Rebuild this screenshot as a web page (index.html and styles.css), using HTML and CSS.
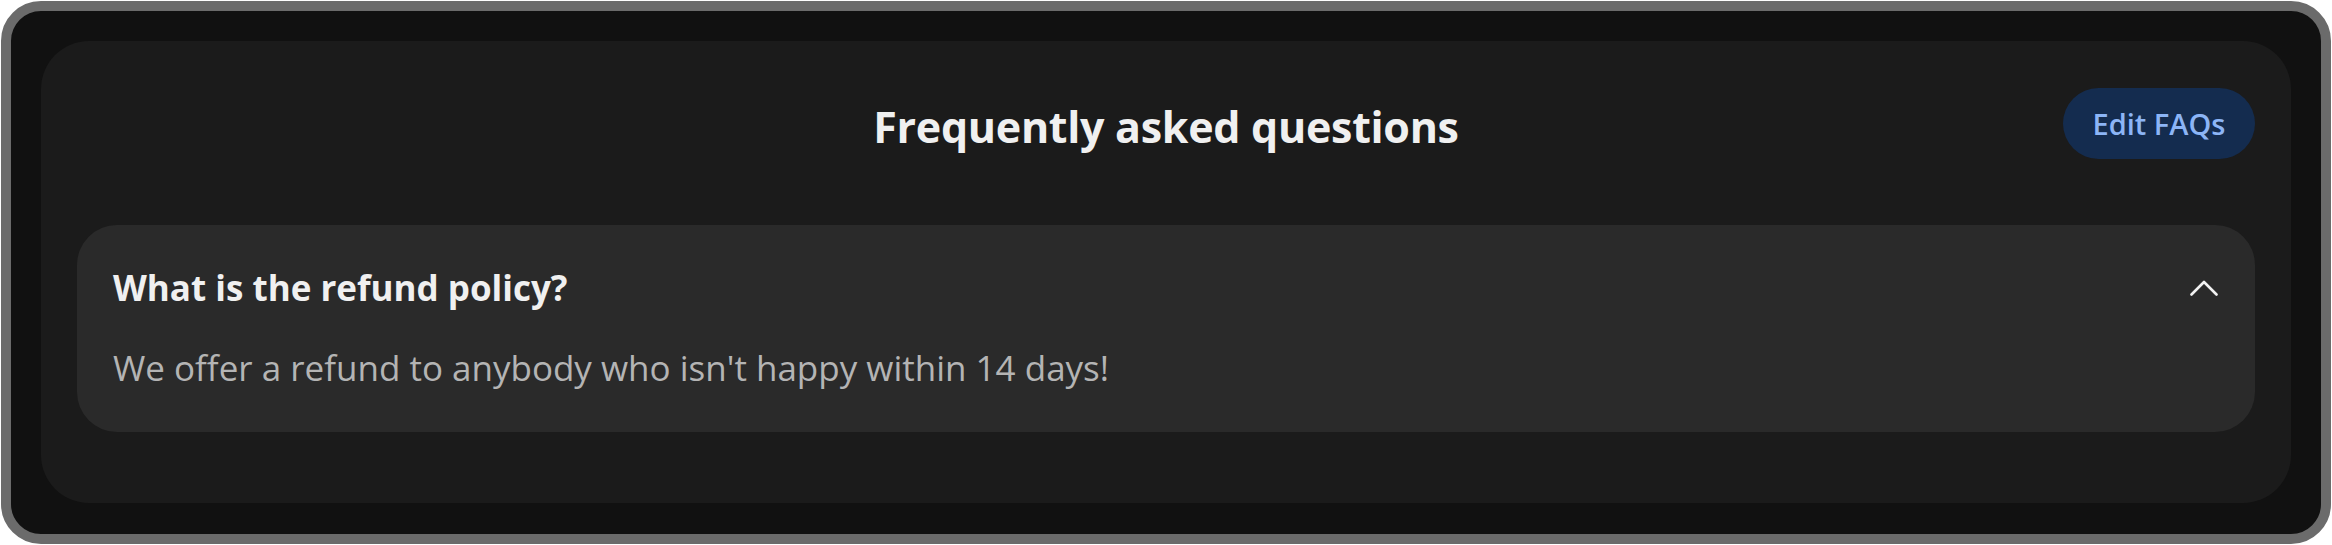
FILE: index.html
```html
<!DOCTYPE html>
<html lang="en">
<head>
    <meta charset="UTF-8">
    <meta name="viewport" content="width=device-width, initial-scale=1.0">
    <title>FAQ</title>
    <link rel="stylesheet" href="styles.css">
</head>
<body>
    <div class="frame">
        <section class="faq-card">
            <div class="faq-header">
                <div class="spacer"></div>
                <h1>Frequently asked questions</h1>
                <button class="edit-btn">Edit FAQs</button>
            </div>
            <div class="faq-item">
                <div class="question-row">
                    <h2>What is the refund policy?</h2>
                    <svg class="chevron" width="28" height="28" viewBox="0 0 28 28">
                        <path d="M1.5 20.5 L14 8 L26.5 20.5" fill="none" stroke="#f2f2f2" stroke-width="2.6" stroke-linecap="round" stroke-linejoin="round"/>
                    </svg>
                </div>
                <p class="answer">We offer a refund to anybody who isn't happy within 14 days!</p>
            </div>
        </section>
    </div>
</body>
</html>
```

FILE: styles.css
```css
body {
    margin: 0;
    background: #ffffff;
    font-family: "Open Sans", "Noto Sans", sans-serif;
}

.frame {
    margin: 1px;
    height: calc(100vh - 2px);
    box-sizing: border-box;
    border: 10px solid #6b6b6b;
    border-radius: 40px;
    background: #111111;
    padding: 30px;
}

.faq-card {
    background: #1b1b1b;
    border-radius: 48px;
    padding: 47px 36px 71px;
}

.faq-header {
    display: grid;
    grid-template-columns: 192px 1fr 192px;
    align-items: center;
}

.faq-header h1 {
    margin: 0;
    padding-top: 6px;
    text-align: center;
    color: #f0f0f0;
    font-size: 43px;
    font-weight: 700;
    letter-spacing: -0.3px;
}

.edit-btn {
    height: 71px;
    width: 192px;
    border: none;
    border-radius: 36px;
    background: #142c4f;
    color: #8cb5f6;
    font-family: inherit;
    font-size: 29px;
    font-weight: 600;
    cursor: pointer;
}

.faq-item {
    margin-top: 66px;
    background: #2a2a2a;
    border-radius: 40px;
    padding: 36px 37px 37px 36px;
}

.question-row {
    display: flex;
    align-items: center;
    justify-content: space-between;
}

.question-row h2 {
    margin: 0;
    color: #f0f0f0;
    font-size: 35px;
    font-weight: 700;
    line-height: 54px;
}

.answer {
    margin: 26px 0 0;
    color: #b4b4b4;
    font-size: 35px;
    line-height: 54px;
}
```
